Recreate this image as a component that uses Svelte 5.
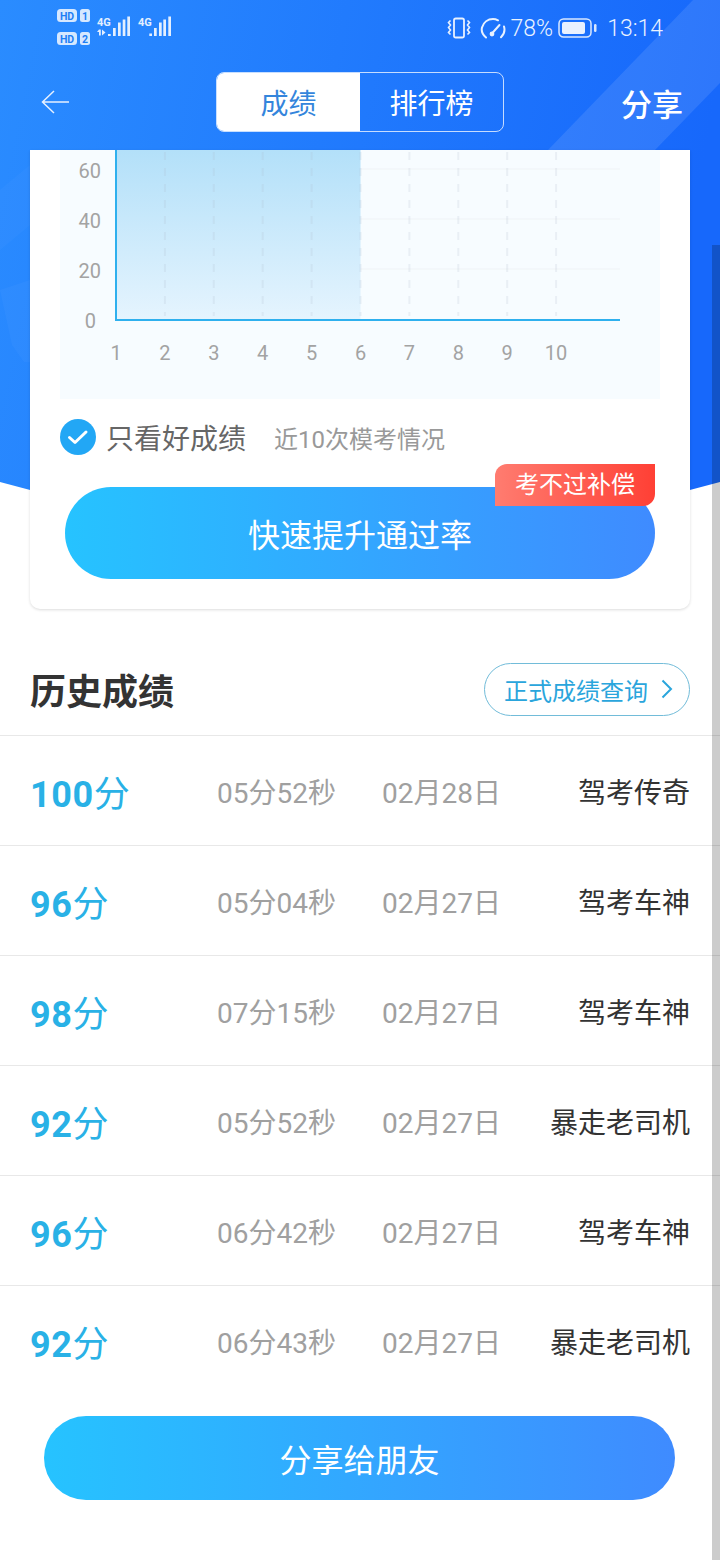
<script lang="ts">
	const records = [
		{ score: 100, time: '05分52秒', date: '02月28日', title: '驾考传奇' },
		{ score: 96, time: '05分04秒', date: '02月27日', title: '驾考车神' },
		{ score: 98, time: '07分15秒', date: '02月27日', title: '驾考车神' },
		{ score: 92, time: '05分52秒', date: '02月27日', title: '暴走老司机' },
		{ score: 96, time: '06分42秒', date: '02月27日', title: '驾考车神' },
		{ score: 92, time: '06分43秒', date: '02月27日', title: '暴走老司机' }
	];

	const xTicks = [1, 2, 3, 4, 5, 6, 7, 8, 9, 10];
	const yTicks = [60, 40, 20];
	const tickX = (n: number) => 56 + (n - 1) * 48.9;
	const tickY = (v: number) => 170 - v * 2.5;
</script>

<div class="page">
	<svg class="hero" viewBox="0 0 720 540" width="720" height="540" aria-hidden="true">
		<defs>
			<linearGradient id="heroBg" x1="0" y1="0" x2="1" y2="0.15">
				<stop offset="0" stop-color="#2a8cff" />
				<stop offset="1" stop-color="#1768fb" />
			</linearGradient>
			<clipPath id="heroClip">
				<path d="M0 0H720V482Q360 582 0 482Z" />
			</clipPath>
		</defs>
		<g clip-path="url(#heroClip)">
			<rect width="720" height="540" fill="url(#heroBg)" />
			<path d="M548 150L693 0H720V83L655 150Z" fill="#fff" opacity="0.1" />
			<path d="M0 190L30 165V225L0 250Z" fill="#fff" opacity="0.025" />
			<path d="M0 290L30 280V362H24L12 345Z" fill="#fff" opacity="0.03" />
		</g>
	</svg>

	<header class="top">
		<div class="status">
			<svg class="sims" viewBox="0 0 34 37" width="34" height="37" aria-hidden="true">
				<rect x="0" y="0" width="20" height="13" rx="3.500" fill="#d6e8ff" />
				<text x="10" y="10.500" class="sim-text">HD</text>
				<rect x="23" y="0" width="10" height="13" rx="2.500" fill="#d6e8ff" />
				<text x="28" y="10.500" class="sim-text">1</text>
				<rect x="0" y="23" width="20" height="13" rx="3.500" fill="#d6e8ff" />
				<text x="10" y="33.500" class="sim-text">HD</text>
				<rect x="23" y="23" width="10" height="13" rx="2.500" fill="#d6e8ff" />
				<text x="28" y="33.500" class="sim-text">2</text>
			</svg>
			<svg class="signal" viewBox="0 0 76 24" width="76" height="24" aria-hidden="true">
				<text x="1" y="12" class="net-text">4G</text>
				<path d="M3 15.500h1.800v6H3zM1 18l2-2.500v2.500zM6 15.500l3.500 3-3.500 3z" fill="#e4efff" />
				<rect x="12" y="20" width="2.700" height="2" fill="#e4efff" />
				<rect x="17" y="14" width="2.700" height="8" fill="#e4efff" />
				<rect x="22" y="8.500" width="2.700" height="13.500" fill="#e4efff" />
				<rect x="26.700" y="5.500" width="2.700" height="16.500" fill="#e4efff" />
				<rect x="31.300" y="2.500" width="2.700" height="19.500" fill="#e4efff" />
				<text x="42" y="12" class="net-text">4G</text>
				<rect x="53.300" y="19.500" width="2.700" height="2.500" fill="#e4efff" />
				<rect x="58" y="14" width="2.700" height="8" fill="#e4efff" />
				<rect x="63" y="8.500" width="2.700" height="13.500" fill="#e4efff" />
				<rect x="67.300" y="5.500" width="2.700" height="16.500" fill="#e4efff" />
				<rect x="72.300" y="2.500" width="2.700" height="19.500" fill="#e4efff" />
			</svg>
			<div class="status-right">
				<svg viewBox="0 0 24 22" width="24" height="22" fill="none" stroke="#e8f1ff" stroke-width="1.800" aria-hidden="true">
					<rect x="7" y="1.500" width="10" height="19" rx="1.800" />
					<path d="M3.500 3.500l-2 2 2 2.500-2 2.500 2 2.500-2 2.500 2 2M20.500 3.500l2 2-2 2.500 2 2.500-2 2.500 2 2.500-2 2" stroke-width="1.600" />
				</svg>
				<svg class="gauge" viewBox="0 0 26 22" width="26" height="22" fill="none" stroke="#e8f1ff" stroke-width="2" stroke-linecap="round" aria-hidden="true">
					<path d="M6 20.500C2.500 17.500 1 14.500 2 10.500 3.500 5 8 2 13 2c2 0 3.500.5 5 1.300" />
					<path d="M24 9.500c1 3.500.5 7.500-3 10.800" />
					<path d="M11.500 17L19.500 8" />
					<circle cx="12" cy="17" r="1.400" fill="#e8f1ff" />
				</svg>
				<span class="pct">78%</span>
				<svg class="battery" viewBox="0 0 40 22" width="40" height="22" fill="none" aria-hidden="true">
					<rect x="1" y="2" width="32" height="18" rx="4.500" stroke="#d9e8ff" stroke-width="1.500" />
					<rect x="4" y="5" width="23" height="12" rx="2" fill="#e9f1ff" />
					<rect x="36" y="7" width="2.500" height="8" rx="1.200" fill="#d9e8ff" />
				</svg>
				<span class="clock">13:14</span>
			</div>
		</div>

		<nav class="nav">
			<svg class="back" viewBox="0 0 28 24" width="28" height="24" fill="none" stroke="#e6f0ff" stroke-width="1.500" aria-hidden="true">
				<path d="M13 1L1.500 12 13 23M1.500 12H28" />
			</svg>
			<div class="tabs">
				<div class="tab active">成绩</div>
				<div class="tab">排行榜</div>
			</div>
			<div class="share">分享</div>
		</nav>
	</header>

	<section class="card">
		<div class="chart">
			<svg viewBox="0 0 600 249" width="600" height="249">
				<defs>
					<linearGradient id="area" x1="0" y1="0" x2="0" y2="1">
						<stop offset="0" stop-color="#b3e0f9" />
						<stop offset="1" stop-color="#e5f4fe" />
					</linearGradient>
				</defs>
				{#each yTicks as v}
					<line x1="56" x2="560" y1={tickY(v) - 1} y2={tickY(v) - 1} class="grid-h" />
				{/each}
				<rect x="56" y="0" width="244.500" height="170" fill="url(#area)" />
				{#each xTicks.slice(1) as n}
					<line x1={tickX(n)} x2={tickX(n)} y1="2" y2="166" class="grid-v" />
				{/each}
				<path d="M56 0V170H560" class="axis" />
				{#each yTicks as v}
					<text x="41" y={tickY(v) + 8} text-anchor="end" class="tick">{v}</text>
				{/each}
				<text x="36" y="178" text-anchor="end" class="tick">0</text>
				{#each xTicks as n}
					<text x={tickX(n)} y="210" text-anchor="middle" class="tick">{n}</text>
				{/each}
			</svg>
		</div>

		<div class="filter">
			<svg viewBox="0 0 36 36" width="36" height="36" aria-hidden="true">
				<circle cx="18" cy="18" r="18" fill="#22a7f5" />
				<path d="M9.500 18.500l5.500 5L26 13" fill="none" stroke="#fff" stroke-width="3" stroke-linecap="round" stroke-linejoin="round" />
			</svg>
			<span class="filter-label">只看好成绩</span>
			<span class="filter-note">近10次模考情况</span>
		</div>

		<div class="boost">
			<button class="cta boost-btn">快速提升通过率</button>
			<span class="badge">考不过补偿</span>
		</div>
	</section>

	<div class="history-head">
		<h2>历史成绩</h2>
		<button class="lookup">
			正式成绩查询
			<svg viewBox="0 0 12 20" width="12" height="20" fill="none" stroke="#2aa5dc" stroke-width="2" aria-hidden="true">
				<path d="M1.500 1.500L10 10l-8.500 8.500" />
			</svg>
		</button>
	</div>

	<ul class="records">
		{#each records as r}
			<li class="record">
				<span class="score"><b>{r.score}</b>分</span>
				<span class="muted">{r.time}</span>
				<span class="muted">{r.date}</span>
				<span class="name">{r.title}</span>
			</li>
		{/each}
	</ul>

	<div class="foot">
		<button class="cta share-btn">分享给朋友</button>
	</div>

	<div class="scrollbar"></div>
</div>

<style>
	:global(body) {
		margin: 0;
		background: #fff;
	}

	.page {
		position: relative;
		width: 720px;
		height: 1560px;
		overflow: hidden;
		background: #fff;
		font-family: Roboto, 'Noto Sans CJK SC', sans-serif;
	}

	.hero {
		position: absolute;
		top: 0;
		left: 0;
	}

	.scrollbar {
		position: absolute;
		top: 245px;
		right: 0;
		bottom: 0;
		width: 8px;
		background: rgba(0, 0, 0, 0.2);
	}

	.top {
		position: relative;
		height: 150px;
	}

	.status {
		display: flex;
		align-items: flex-start;
		height: 72px;
		padding-left: 57px;
		box-sizing: border-box;
	}

	.sims {
		margin-top: 9px;
		flex: none;
	}

	.sim-text {
		font: 700 10.500px Roboto, sans-serif;
		fill: #1f7ff5;
		text-anchor: middle;
	}

	.net-text {
		font: 700 11px Roboto, sans-serif;
		fill: #e4efff;
	}

	.signal {
		margin-top: 14px;
		margin-left: 5px;
	}

	.status-right {
		display: flex;
		align-items: center;
		height: 22px;
		margin-top: 17px;
		margin-left: auto;
		padding-right: 57px;
		color: #e9f2ff;
		font-size: 23px;
		font-weight: 300;
	}

	.gauge {
		margin-left: 9px;
	}

	.pct {
		margin-left: 5px;
	}

	.battery {
		margin-left: 5px;
	}

	.clock {
		margin-left: 9px;
	}

	.nav {
		display: flex;
		align-items: center;
		height: 60px;
		padding: 0 37px 0 41px;
	}

	.back {
		margin-top: -1px;
	}

	.tabs {
		display: flex;
		width: 288px;
		height: 60px;
		margin-left: 147px;
		box-sizing: border-box;
		border: 1px solid rgba(255, 255, 255, 0.75);
		border-radius: 8px;
		overflow: hidden;
	}

	.tab {
		flex: 1;
		line-height: 64px;
		height: 58px;
		text-align: center;
		font-size: 28px;
		color: #fff;
	}

	.tab.active {
		background: #fff;
		color: #3485dc;
	}

	.share {
		margin-left: auto;
		font-size: 31px;
		font-weight: 500;
		color: #fff;
	}

	.card {
		position: relative;
		height: 459px;
		margin: 0 30px;
		padding: 0 30px;
		box-sizing: border-box;
		background: #fff;
		border-radius: 0 0 10px 10px;
		box-shadow: 0 1px 3px rgba(0, 0, 0, 0.14);
	}

	.chart {
		height: 249px;
		background: #f7fcff;
	}

	.chart svg {
		display: block;
	}

	.grid-h {
		stroke: #eff3f6;
		stroke-width: 1;
	}

	.grid-v {
		stroke: rgba(170, 185, 200, 0.18);
		stroke-width: 2;
		stroke-dasharray: 8 8;
	}

	.axis {
		fill: none;
		stroke: #2fb0ee;
		stroke-width: 2;
	}

	.tick {
		font-size: 20px;
		fill: #a3a3a3;
	}

	.filter {
		display: flex;
		align-items: center;
		height: 36px;
		margin-top: 20px;
	}

	.filter-label {
		margin-left: 10px;
		font-size: 28px;
		color: #666;
	}

	.filter-note {
		margin-left: 28px;
		font-size: 24px;
		color: #999;
	}

	.boost {
		position: relative;
		margin: 32px 5px 0;
	}

	.cta {
		display: block;
		width: 100%;
		padding: 0;
		border: 0;
		color: #fff;
		font-family: inherit;
		font-size: 32px;
		background: linear-gradient(90deg, #26c3ff, #3f8bff);
	}

	.boost-btn {
		height: 92px;
		border-radius: 46px;
	}

	.badge {
		position: absolute;
		top: -23px;
		right: 0;
		width: 160px;
		height: 42px;
		line-height: 42px;
		text-align: center;
		font-size: 24px;
		color: #fff;
		background: linear-gradient(90deg, #ff7c70, #ff4035);
		border-radius: 12px 0 12px 0;
	}

	.history-head {
		display: flex;
		align-items: center;
		justify-content: space-between;
		height: 126px;
		padding: 34px 30px 0;
		box-sizing: border-box;
	}

	.history-head h2 {
		margin: 0;
		font-size: 36px;
		font-weight: 700;
		color: #333;
	}

	.lookup {
		display: flex;
		align-items: center;
		gap: 13px;
		width: 206px;
		height: 53px;
		padding: 0 0 0 19px;
		box-sizing: border-box;
		border: 1px solid #72bcd9;
		border-radius: 27px;
		background: #fff;
		font-family: inherit;
		font-size: 24px;
		color: #2aa5dc;
		white-space: nowrap;
	}

	.records {
		margin: 0;
		padding: 0;
		list-style: none;
	}

	.record {
		display: grid;
		grid-template-columns: 187px 165px 1fr auto;
		align-items: center;
		height: 110px;
		padding: 1px 30px 0;
		box-sizing: border-box;
		border-top: 1px solid #e8e8e8;
		font-size: 28px;
	}

	.score {
		font-size: 36px;
		color: #29b1e6;
	}

	.score b {
		font-weight: 700;
		letter-spacing: 0.6px;
	}

	.muted {
		color: #a0a0a0;
	}

	.name {
		color: #333;
	}

	.foot {
		padding: 21px 45px 0 44px;
	}

	.share-btn {
		height: 84px;
		border-radius: 42px;
	}
</style>
